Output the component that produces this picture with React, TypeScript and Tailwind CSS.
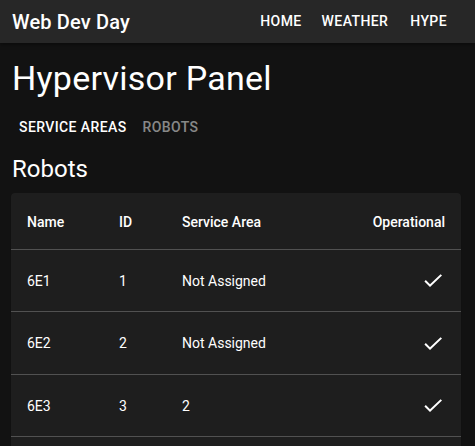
const robots = [
  { name: "6E1", id: 1, area: "Not Assigned", operational: true },
  { name: "6E2", id: 2, area: "Not Assigned", operational: true },
  { name: "6E3", id: 3, area: "2", operational: true },
]

function CheckIcon() {
  return (
    <svg viewBox="0 0 24 24" className="h-6 w-6 fill-white">
      <path d="M9 16.17 4.83 12l-1.42 1.41L9 19 21 7.59 19.59 6.17z" />
    </svg>
  )
}

export default function App() {
  return (
    <div className="min-h-screen bg-[#121212] text-white font-['Roboto',sans-serif]">
      {/* App bar */}
      <header className="flex h-[43px] items-center bg-[#272727] pl-3 pr-5 shadow-[0_2px_4px_rgba(0,0,0,0.4)]">
        <div className="text-[20px] font-medium tracking-[0.15px]">Web Dev Day</div>
        <nav className="ml-auto flex items-center gap-1 text-[14px] font-medium uppercase tracking-[0.4px]">
          <span className="px-2 py-1.5">Home</span>
          <span className="px-2 py-1.5">Weather</span>
          <span className="ml-[2px] px-2 py-1.5">Hype</span>
        </nav>
      </header>

      <main className="pl-[11px] pr-[14px]">
        {/* Title */}
        <h1 className="mt-[14px] pl-px text-[34px] leading-[42px] tracking-[0.25px]">
          Hypervisor Panel
        </h1>

        {/* Tabs */}
        <div className="mt-[18px] flex text-[14px] leading-5 font-medium uppercase tracking-[0.4px]">
          <span className="pl-2 pr-4 text-white">Service Areas</span>
          <span className="text-white/50">Robots</span>
        </div>

        {/* Section */}
        <h2 className="mt-4 pl-px text-[24px] leading-8">Robots</h2>

        <div className="mt-2 rounded bg-[#1e1e1e] pb-4 text-[14px] shadow-[0_2px_1px_-1px_rgba(0,0,0,0.2),0_1px_1px_0_rgba(0,0,0,0.14)]">
          <table className="w-full table-fixed border-collapse">
            <thead>
              <tr className="h-[56px] border-b border-[#515151]">
                <th className="w-[92px] pl-4 pt-[3px] text-left font-medium">Name</th>
                <th className="w-[63px] pl-4 pt-[3px] text-left font-medium">ID</th>
                <th className="pl-4 pt-[3px] text-left font-medium">Service Area</th>
                <th className="w-[120px] pr-4 pt-[3px] text-right font-medium">Operational</th>
              </tr>
            </thead>
            <tbody>
              {robots.map((r) => (
                <tr key={r.name} className="h-[62.5px] border-b border-[#515151]">
                  <td className="pl-4 pt-[2px]">{r.name}</td>
                  <td className="pl-4 pt-[2px]">{r.id}</td>
                  <td className="pl-4 pt-[2px]">{r.area}</td>
                  <td className="pr-4">
                    <div className="flex justify-end">{r.operational && <CheckIcon />}</div>
                  </td>
                </tr>
              ))}
            </tbody>
          </table>
        </div>
      </main>
    </div>
  )
}
